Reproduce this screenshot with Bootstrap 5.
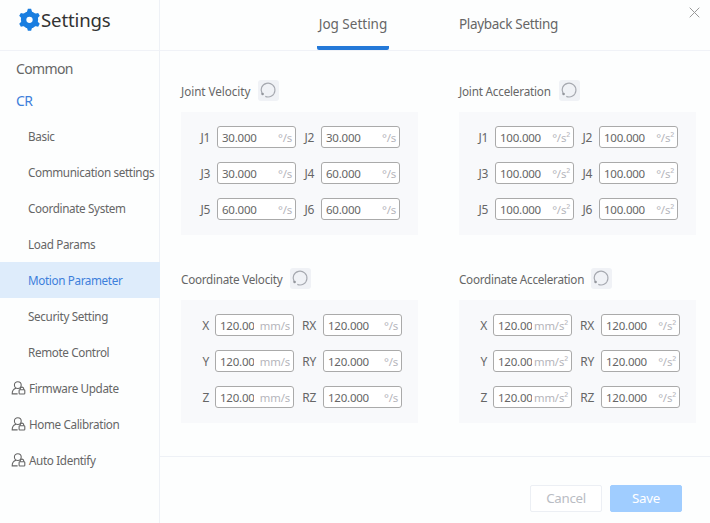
<!DOCTYPE html>
<html lang="en">
<head>
<meta charset="utf-8">
<meta name="viewport" content="width=device-width, initial-scale=1">
<title>Settings</title>
<link href="https://cdn.jsdelivr.net/npm/bootstrap@5.3.0/dist/css/bootstrap.min.css" rel="stylesheet">
<style>
body{font-family:"Noto Sans","Open Sans",sans-serif;font-size:12px;line-height:16px;color:#666;background:#fdfefe;height:523px;overflow:hidden}
.side{width:160px;border-right:1px solid #eef1f6}
.brand{height:51px;border-bottom:1px solid #f0f2f7;padding:0 0 11px 18px;color:#333}
.brand-name{font-size:18.6px;letter-spacing:-.15px;line-height:24px;width:70px}
.side .nav{padding-top:2px}
.side .nav-link{height:36px;padding:0 0 0 28px;color:#666;font-size:11.7px;letter-spacing:-.36px;border-radius:0;white-space:nowrap}
.side .nav-link.top{height:32px;padding-left:16px;font-size:14px;letter-spacing:-.65px}
.side .nav-link.locked{padding-left:11px}
.side .nav-link.locked svg{margin-right:3px}
.side .nav-link.active{background:#deecfb;color:#3d7fdb;width:160px}
.side .nav-link.current{color:#3d7fdb;margin-bottom:1px}
.tabs{height:51px;border-bottom:1px solid #f0f2f7;padding-left:157px}
.tabs .nav-link{padding:2px 0 0;height:50px;color:#666;font-size:13.5px;border-bottom:4px solid transparent;white-space:nowrap}
.tabs .nav-link.active{border-bottom:4px solid #2479d8;border-radius:2px;width:72px}
.tabs .nav-link.second{margin-left:70px;letter-spacing:-.32px}
.close-x{right:10px;top:7px;line-height:0}
.groups{padding:29px 13px 0 21px;column-gap:41px;row-gap:33px;display:grid;grid-template-columns:237px 237px}
.reset{width:21px;height:21px;background:#f0f2f6;border-radius:3px;padding:0;border:0;margin-left:7px}
.head{height:21px;font-size:11.7px;white-space:nowrap}
.head span{padding-top:1px}
.h1t{width:70px;letter-spacing:-.05px}
.h2t{width:93px;letter-spacing:-.2px}
.h3t{width:102px;letter-spacing:-.25px}
.h4t{width:125px;letter-spacing:-.28px}
.panel{background:#f8f9fb;height:123px;margin-top:11px;padding-top:14px}
.frow{height:22px;margin-bottom:14px}
.lab,.lab2{letter-spacing:-.3px;padding-top:2px}
.lab{text-align:right;width:29px;margin-right:7px}
.lab2{text-align:right;width:18px;margin-right:7px}
.coord .lab{width:28px;margin-right:6px}
.coord .lab2{width:22px;margin-right:7px}
.field{width:79px;height:22px;border:1px solid #aaa;border-radius:3px;background:#fff;padding:2px 3px 0 4px;font-size:11.5px;letter-spacing:-.23px}
.field b{font-weight:400;flex:0 0 44px;overflow:hidden;white-space:nowrap}
.field i{font-style:normal;color:#b5b5bb;flex:none;margin-left:auto}
.coord .lab + .field b{flex-basis:34px}
.coord .lab + .field i{font-size:11.3px;letter-spacing:-.15px}
.foot{height:67px;border-top:1px solid #eef1f6;padding:28px 28px 0 0}
.foot .btn{width:72px;height:27px;padding:0;font-size:13.3px;letter-spacing:-.3px;line-height:25px;border-radius:2px}
.b-cancel,.b-cancel:hover{color:#b9bcc3;background:#fff;border-color:#eceff4}
.b-save,.b-save:hover{color:#fff;background:#a0cdff;border-color:#a0cdff}
</style>
<script src="https://cdn.jsdelivr.net/npm/bootstrap@5.3.0/dist/js/bootstrap.bundle.min.js"></script>
</head>
<body class="d-flex">
<svg width="0" height="0" class="position-absolute">
  <symbol id="reset" viewBox="0 0 21 21"><path d="M4.1 13.6A6.9 6.9 0 1 1 7.3 16.4" fill="none" stroke="#a6a9b0" stroke-width="1.2"/><circle cx="4.6" cy="14" r="1.3" fill="#94979d"/></symbol>
  <symbol id="lock-user" viewBox="0 0 15 15"><g fill="none" stroke="#666" stroke-width="1.1"><circle cx="6.8" cy="4.1" r="3.4"/><path d="M6.6 12.9H1.2C1.1 9.9 2.3 8 5 7.2"/><rect x="8.1" y="8.8" width="5.7" height="4.2" rx=".8"/><path d="M9.2 8.7V7.9a1.75 1.75 0 0 1 3.5 0v.8"/></g></symbol>
</svg>
<aside class="side flex-shrink-0">
  <div class="brand d-flex align-items-center">
    <svg width="23" height="23" viewBox="0 0 24 24"><g fill="#1a7ee0"><circle cx="12" cy="12.3" r="9"/><g id="t"><path d="M9 5.3L10.3.9h3.4L15 5.3z"/><path d="M9 19.3l1.3 4.4h3.4l1.3-4.4z"/></g><use href="#t" transform="rotate(60 12 12.3)"/><use href="#t" transform="rotate(120 12 12.3)"/></g><circle cx="12" cy="12.3" r="3.3" fill="#fff"/></svg>
    <span class="brand-name">Settings</span>
  </div>
  <nav class="nav flex-column flex-nowrap">
    <a class="nav-link top d-flex align-items-center">Common</a>
    <a class="nav-link top current d-flex align-items-center">CR</a>
    <a class="nav-link d-flex align-items-center">Basic</a>
    <a class="nav-link d-flex align-items-center">Communication settings</a>
    <a class="nav-link d-flex align-items-center">Coordinate System</a>
    <a class="nav-link d-flex align-items-center">Load Params</a>
    <a class="nav-link active d-flex align-items-center">Motion Parameter</a>
    <a class="nav-link d-flex align-items-center">Security Setting</a>
    <a class="nav-link d-flex align-items-center">Remote Control</a>
    <a class="nav-link locked d-flex align-items-center"><svg width="15" height="15"><use href="#lock-user"/></svg>Firmware Update</a>
    <a class="nav-link locked d-flex align-items-center"><svg width="15" height="15"><use href="#lock-user"/></svg>Home Calibration</a>
    <a class="nav-link locked d-flex align-items-center"><svg width="15" height="15"><use href="#lock-user"/></svg>Auto Identify</a>
  </nav>
</aside>
<main class="flex-grow-1 d-flex flex-column position-relative">
  <nav class="tabs nav flex-nowrap">
    <a class="nav-link active d-flex align-items-center justify-content-center">Jog Setting</a>
    <a class="nav-link second d-flex align-items-center">Playback Setting</a>
  </nav>
  <div class="close-x position-absolute"><svg width="11" height="11" viewBox="0 0 11 11"><path d="M.7.7l9.6 9.6M10.3.7L.7 10.3" stroke="#999" stroke-width="1"/></svg></div>
  <div class="groups flex-grow-1 align-content-start">
    <section>
      <div class="head d-flex align-items-center"><span class="h1t">Joint Velocity</span><button class="reset d-flex"><svg width="21" height="21"><use href="#reset"/></svg></button></div>
      <div class="panel">
        <div class="frow d-flex align-items-center"><span class="lab">J1</span><div class="field d-flex align-items-center"><b>30.000</b><i>°/s</i></div><span class="lab2">J2</span><div class="field d-flex align-items-center"><b>30.000</b><i>°/s</i></div></div>
        <div class="frow d-flex align-items-center"><span class="lab">J3</span><div class="field d-flex align-items-center"><b>30.000</b><i>°/s</i></div><span class="lab2">J4</span><div class="field d-flex align-items-center"><b>60.000</b><i>°/s</i></div></div>
        <div class="frow d-flex align-items-center"><span class="lab">J5</span><div class="field d-flex align-items-center"><b>60.000</b><i>°/s</i></div><span class="lab2">J6</span><div class="field d-flex align-items-center"><b>60.000</b><i>°/s</i></div></div>
      </div>
    </section>
    <section>
      <div class="head d-flex align-items-center"><span class="h2t">Joint Acceleration</span><button class="reset d-flex"><svg width="21" height="21"><use href="#reset"/></svg></button></div>
      <div class="panel">
        <div class="frow d-flex align-items-center"><span class="lab">J1</span><div class="field d-flex align-items-center"><b>100.000</b><i>°/s²</i></div><span class="lab2">J2</span><div class="field d-flex align-items-center"><b>100.000</b><i>°/s²</i></div></div>
        <div class="frow d-flex align-items-center"><span class="lab">J3</span><div class="field d-flex align-items-center"><b>100.000</b><i>°/s²</i></div><span class="lab2">J4</span><div class="field d-flex align-items-center"><b>100.000</b><i>°/s²</i></div></div>
        <div class="frow d-flex align-items-center"><span class="lab">J5</span><div class="field d-flex align-items-center"><b>100.000</b><i>°/s²</i></div><span class="lab2">J6</span><div class="field d-flex align-items-center"><b>100.000</b><i>°/s²</i></div></div>
      </div>
    </section>
    <section class="coord">
      <div class="head d-flex align-items-center"><span class="h3t">Coordinate Velocity</span><button class="reset d-flex"><svg width="21" height="21"><use href="#reset"/></svg></button></div>
      <div class="panel">
        <div class="frow d-flex align-items-center"><span class="lab">X</span><div class="field d-flex align-items-center"><b>120.000</b><i>mm/s</i></div><span class="lab2">RX</span><div class="field d-flex align-items-center"><b>120.000</b><i>°/s</i></div></div>
        <div class="frow d-flex align-items-center"><span class="lab">Y</span><div class="field d-flex align-items-center"><b>120.000</b><i>mm/s</i></div><span class="lab2">RY</span><div class="field d-flex align-items-center"><b>120.000</b><i>°/s</i></div></div>
        <div class="frow d-flex align-items-center"><span class="lab">Z</span><div class="field d-flex align-items-center"><b>120.000</b><i>mm/s</i></div><span class="lab2">RZ</span><div class="field d-flex align-items-center"><b>120.000</b><i>°/s</i></div></div>
      </div>
    </section>
    <section class="coord">
      <div class="head d-flex align-items-center"><span class="h4t">Coordinate Acceleration</span><button class="reset d-flex"><svg width="21" height="21"><use href="#reset"/></svg></button></div>
      <div class="panel">
        <div class="frow d-flex align-items-center"><span class="lab">X</span><div class="field d-flex align-items-center"><b>120.000</b><i>mm/s²</i></div><span class="lab2">RX</span><div class="field d-flex align-items-center"><b>120.000</b><i>°/s²</i></div></div>
        <div class="frow d-flex align-items-center"><span class="lab">Y</span><div class="field d-flex align-items-center"><b>120.000</b><i>mm/s²</i></div><span class="lab2">RY</span><div class="field d-flex align-items-center"><b>120.000</b><i>°/s²</i></div></div>
        <div class="frow d-flex align-items-center"><span class="lab">Z</span><div class="field d-flex align-items-center"><b>120.000</b><i>mm/s²</i></div><span class="lab2">RZ</span><div class="field d-flex align-items-center"><b>120.000</b><i>°/s²</i></div></div>
      </div>
    </section>
  </div>
  <footer class="foot d-flex justify-content-end gap-2">
    <button class="btn b-cancel">Cancel</button>
    <button class="btn b-save">Save</button>
  </footer>
</main>
</body>
</html>
